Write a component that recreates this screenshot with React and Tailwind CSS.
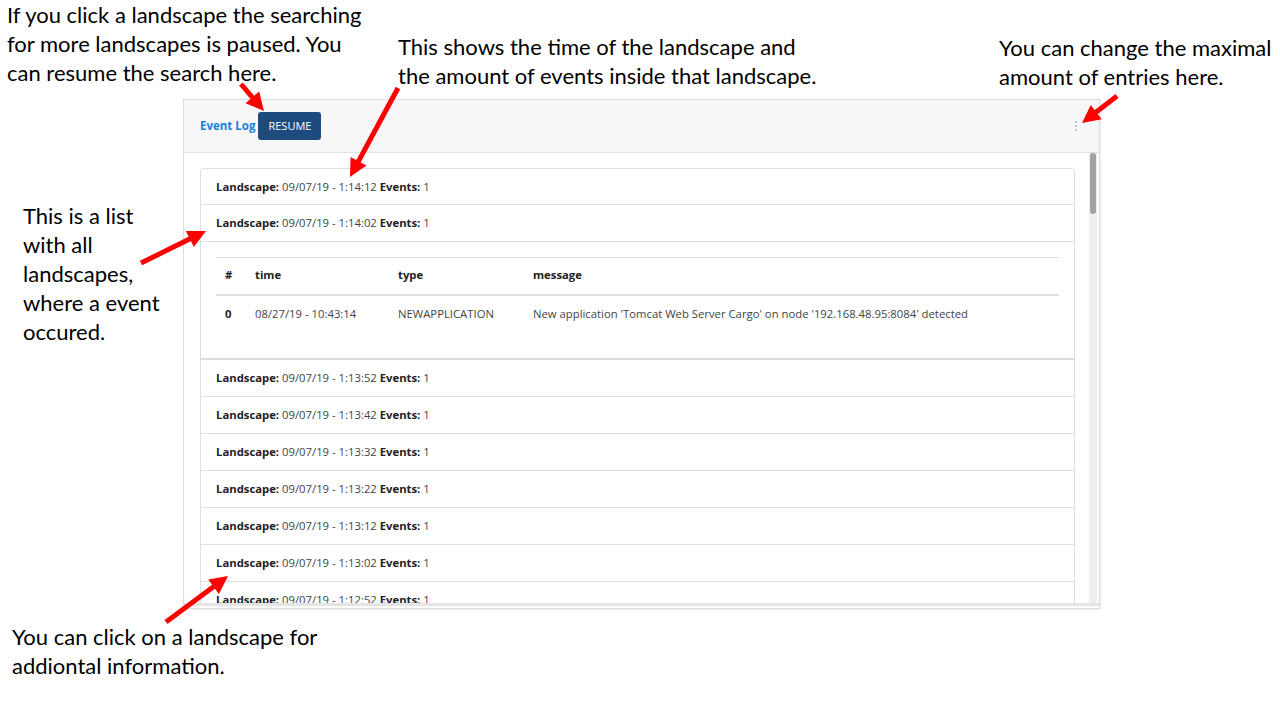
import React from "react";

const arrows = [
  [241, 84, 264, 111],
  [398, 88, 350, 177],
  [1117, 96, 1082, 123],
  [141, 263, 206, 231],
  [166, 622, 228, 576],
];

function Arrow({ t }) {
  const [x1, y1, x2, y2] = t;
  const dx = x2 - x1, dy = y2 - y1;
  const len = Math.hypot(dx, dy);
  const ux = dx / len, uy = dy / len;
  const L = 18, W = 9;
  const bx = x2 - ux * L, by = y2 - uy * L;
  const nx = -uy, ny = ux;
  const pts = `${x2},${y2} ${bx + nx * W},${by + ny * W} ${bx - nx * W},${by - ny * W}`;
  return (
    <g>
      <line x1={x1} y1={y1} x2={bx + ux * 2} y2={by + uy * 2} stroke="#ff0000" strokeWidth="5" />
      <polygon points={pts} fill="#ff0000" />
    </g>
  );
}

const rowsTop = ["1:14:12", "1:14:02"];
const rowsBottom = ["1:13:52", "1:13:42", "1:13:32", "1:13:22", "1:13:12", "1:13:02", "1:12:52"];

function Row({ time, first }) {
  return (
    <div
      className={`h-[37px] flex items-center pl-[15px] pt-[1px] border-x border-b border-[#dfdfdf] ${first ? "border-t rounded-t-[3px]" : ""} text-[11.3px] text-[#444]`}
    >
      <span className="font-bold text-[#222]">Landscape:</span>
      <span>&nbsp;09/07/19 - {time}&nbsp;</span>
      <span className="font-bold text-[#222]">Events:</span>
      <span>&nbsp;1</span>
    </div>
  );
}

export default function App() {
  const ann = "text-[22px] leading-[29px] text-black";
  return (
    <div className="relative w-[1280px] h-[720px] bg-white overflow-hidden" style={{ fontFamily: "Lato, 'Open Sans', sans-serif" }}>
      {/* Panel */}
      <div className="absolute left-[183px] top-[99px] w-[917px] h-[510px] border border-[#dcdcdc] bg-white shadow-[1px_1px_2px_rgba(0,0,0,0.08)] flex flex-col" style={{ fontFamily: "'Open Sans', 'Noto Sans', sans-serif" }}>
        <div className="h-[53px] shrink-0 bg-[#f7f7f7] border-b border-[#e2e2e2] flex items-center pl-[16px] pr-[22px]">
          <span className="text-[11.5px] font-bold text-[#1a7fe0]">Event Log</span>
          <button className="ml-[3px] w-[63px] h-[28px] rounded-[3px] bg-[#1f4a7e] text-white text-[11px] flex items-center justify-center">RESUME</button>
          <div className="ml-auto flex flex-col gap-[2px] items-center">
            <span className="w-[2px] h-[2px] rounded-full bg-[#aab0b8]" />
            <span className="w-[2px] h-[2px] rounded-full bg-[#aab0b8]" />
            <span className="w-[2px] h-[2px] rounded-full bg-[#aab0b8]" />
          </div>
        </div>
        <div className="h-[450px] shrink-0 flex overflow-hidden">
          <div className="flex-1 overflow-hidden pt-[15px] pl-[16px] pr-[14px]">
            {rowsTop.map((t, i) => (
              <Row key={t} time={t} first={i === 0} />
            ))}
            <div className="h-[118px] border-x border-b-2 border-[#dcdcdc] px-[15px] pt-[15px]">
              <table className="w-full text-[11.3px] text-[#444] border-t border-[#dedede]">
                <thead>
                  <tr className="h-[37px] border-b-2 border-[#dedede] text-left text-[#222]">
                    <th className="pl-[9px] w-[39px] font-bold">#</th>
                    <th className="w-[143px] font-bold">time</th>
                    <th className="w-[135px] font-bold">type</th>
                    <th className="font-bold">message</th>
                  </tr>
                </thead>
                <tbody>
                  <tr className="h-[38px]">
                    <td className="pl-[9px] font-bold text-[#222]">0</td>
                    <td>08/27/19 - 10:43:14</td>
                    <td>NEWAPPLICATION</td>
                    <td>New application 'Tomcat Web Server Cargo' on node '192.168.48.95:8084' detected</td>
                  </tr>
                </tbody>
              </table>
            </div>
            {rowsBottom.map((t) => (
              <Row key={t} time={t} />
            ))}
          </div>
          <div className="w-[8px] shrink-0 bg-[#efefef] mr-[2px] flex flex-col">
            <div className="mx-auto w-[6px] h-[61px] rounded-[3px] bg-[#a3a3a3]" />
          </div>
        </div>
        <div className="h-[3px] shrink-0 bg-[#e4e4e4]" />
      </div>

      {/* Annotations */}
      <div className={`absolute left-[7px] top-[0px] ${ann}`}>
        If you click a landscape the searching<br />for more landscapes is paused. You<br />can resume the search here.
      </div>
      <div className={`absolute left-[398px] top-[32px] ${ann}`}>
        This shows the time of the landscape and<br />the amount of events inside that landscape.
      </div>
      <div className={`absolute left-[999px] top-[33px] ${ann}`}>
        You can change the maximal<br />amount of entries here.
      </div>
      <div className={`absolute left-[23px] top-[201px] ${ann}`}>
        This is a list<br />with all<br />landscapes,<br />where a event<br />occured.
      </div>
      <div className={`absolute left-[12px] top-[622px] ${ann}`}>
        You can click on a landscape for<br />addiontal information.
      </div>

      <svg className="absolute inset-0 pointer-events-none" width="1280" height="720">
        {arrows.map((a, i) => (
          <Arrow key={i} t={a} />
        ))}
      </svg>
    </div>
  );
}
